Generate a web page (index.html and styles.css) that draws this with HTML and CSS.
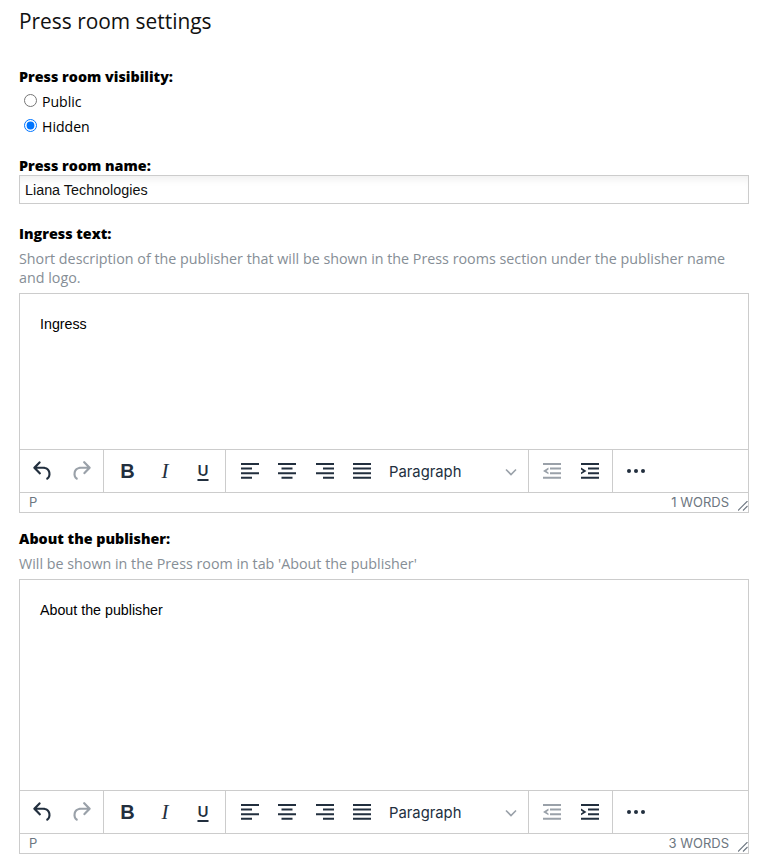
FILE: index.html
```html
<!DOCTYPE html>
<html lang="en">
<head>
    <meta charset="UTF-8">
    <meta name="viewport" content="width=device-width, initial-scale=1.0">
    <title>Press room settings</title>
    <link rel="stylesheet" href="styles.css">
</head>
<body>

<svg class="icon-defs" width="0" height="0" aria-hidden="true">
    <symbol id="i-undo" viewBox="0 0 24 24"><path d="M6.4 8H12c3.7 0 6.2 2 6.8 5.1.6 2.7-.4 5.6-2.3 6.8a1 1 0 0 1-1-1.8c1.1-.6 1.8-2.7 1.4-4.6-.5-2.1-2.1-3.5-4.9-3.5H6.4l3.3 3.3a1 1 0 1 1-1.4 1.4l-5-5a1 1 0 0 1 0-1.4l5-5a1 1 0 0 1 1.4 1.4L6.4 8z"/></symbol>
    <symbol id="i-redo" viewBox="0 0 24 24"><path d="M17.6 10H12c-2.8 0-4.4 1.4-4.9 3.5-.4 2 .3 4 1.4 4.6a1 1 0 1 1-1 1.8c-2-1.2-2.9-4.1-2.3-6.8.6-3 3-5.1 6.8-5.1h5.6l-3.3-3.3a1 1 0 1 1 1.4-1.4l5 5a1 1 0 0 1 0 1.4l-5 5a1 1 0 0 1-1.4-1.4l3.3-3.3z"/></symbol>
    <symbol id="i-left" viewBox="0 0 18 16"><path d="M0 0h18v2H0zM0 4.6h11v2H0zM0 9.2h18v2H0zM0 13.8h11v2H0z"/></symbol>
    <symbol id="i-center" viewBox="0 0 18 16"><path d="M0 0h18v2H0zM3.5 4.6h11v2h-11zM0 9.2h18v2H0zM3.5 13.8h11v2h-11z"/></symbol>
    <symbol id="i-right" viewBox="0 0 18 16"><path d="M0 0h18v2H0zM7 4.6h11v2H7zM0 9.2h18v2H0zM7 13.8h11v2H7z"/></symbol>
    <symbol id="i-justify" viewBox="0 0 18 16"><path d="M0 0h18v2H0zM0 4.6h18v2H0zM0 9.2h18v2H0zM0 13.8h18v2H0z"/></symbol>
    <symbol id="i-outdent" viewBox="0 0 18 16"><path d="M0 0h18v2H0zM7 4.6h11v2H7zM7 9.2h11v2H7zM0 13.8h18v2H0zM5.5 4.6v1.8L3.4 7.9l2.1 1.5v1.8L0 7.9z"/></symbol>
    <symbol id="i-indent" viewBox="0 0 18 16"><path d="M0 0h18v2H0zM7 4.6h11v2H7zM7 9.2h11v2H7zM0 13.8h18v2H0zM0 4.6v1.8l2.1 1.5L0 9.4v1.8l5.5-3.3z"/></symbol>
</svg>

<div class="container">
    <h2 class="page-title">Press room settings</h2>

    <div class="field field-visibility">
        <div class="field-label">Press room visibility:</div>
        <div class="radio-list">
            <label class="radio-row"><input type="radio" name="visibility"> Public</label>
            <label class="radio-row"><input type="radio" name="visibility" checked> Hidden</label>
        </div>
    </div>

    <div class="field field-name">
        <label class="field-label" for="roomName">Press room name:</label>
        <input class="text-input" type="text" id="roomName" value="Liana Technologies">
    </div>

    <div class="field field-ingress">
        <div class="field-label">Ingress text:</div>
        <p class="field-help">Short description of the publisher that will be shown in the Press rooms section under the publisher name and logo.</p>
        <div class="editor">
            <div class="editor-body editor-body-short">Ingress</div>
            <div class="toolbar">
                <div class="tb-group tb-group-2">
                    <span class="tb-btn"><svg class="ic-24"><use href="#i-undo"/></svg></span>
                    <span class="tb-btn tb-off"><svg class="ic-24"><use href="#i-redo"/></svg></span>
                </div>
                <div class="tb-group tb-group-3">
                    <span class="tb-btn tb-bold">B</span>
                    <span class="tb-btn tb-italic">I</span>
                    <span class="tb-btn tb-under">U</span>
                </div>
                <div class="tb-group tb-group-wide">
                    <span class="tb-btn"><svg class="ic-18"><use href="#i-left"/></svg></span>
                    <span class="tb-btn"><svg class="ic-18"><use href="#i-center"/></svg></span>
                    <span class="tb-btn"><svg class="ic-18"><use href="#i-right"/></svg></span>
                    <span class="tb-btn"><svg class="ic-18"><use href="#i-justify"/></svg></span>
                    <span class="tb-select">Paragraph<svg class="chevron" viewBox="0 0 12 8"><path d="M1 1.5l5 5 5-5"/></svg></span>
                </div>
                <div class="tb-group tb-group-2">
                    <span class="tb-btn tb-off"><svg class="ic-18"><use href="#i-outdent"/></svg></span>
                    <span class="tb-btn"><svg class="ic-18"><use href="#i-indent"/></svg></span>
                </div>
                <div class="tb-group tb-group-last">
                    <span class="tb-btn"><span class="dots"><i></i><i></i><i></i></span></span>
                </div>
            </div>
            <div class="statusbar">
                <span>P</span>
                <span class="word-count">1 WORDS</span>
                <svg class="grip" viewBox="0 0 10 10"><path d="M0 9.5L9.5 0M5 9.5L9.5 5"/></svg>
            </div>
        </div>
    </div>

    <div class="field field-about">
        <div class="field-label">About the publisher:</div>
        <p class="field-help">Will be shown in the Press room in tab 'About the publisher'</p>
        <div class="editor">
            <div class="editor-body editor-body-tall">About the publisher</div>
            <div class="toolbar">
                <div class="tb-group tb-group-2">
                    <span class="tb-btn"><svg class="ic-24"><use href="#i-undo"/></svg></span>
                    <span class="tb-btn tb-off"><svg class="ic-24"><use href="#i-redo"/></svg></span>
                </div>
                <div class="tb-group tb-group-3">
                    <span class="tb-btn tb-bold">B</span>
                    <span class="tb-btn tb-italic">I</span>
                    <span class="tb-btn tb-under">U</span>
                </div>
                <div class="tb-group tb-group-wide">
                    <span class="tb-btn"><svg class="ic-18"><use href="#i-left"/></svg></span>
                    <span class="tb-btn"><svg class="ic-18"><use href="#i-center"/></svg></span>
                    <span class="tb-btn"><svg class="ic-18"><use href="#i-right"/></svg></span>
                    <span class="tb-btn"><svg class="ic-18"><use href="#i-justify"/></svg></span>
                    <span class="tb-select">Paragraph<svg class="chevron" viewBox="0 0 12 8"><path d="M1 1.5l5 5 5-5"/></svg></span>
                </div>
                <div class="tb-group tb-group-2">
                    <span class="tb-btn tb-off"><svg class="ic-18"><use href="#i-outdent"/></svg></span>
                    <span class="tb-btn"><svg class="ic-18"><use href="#i-indent"/></svg></span>
                </div>
                <div class="tb-group tb-group-last">
                    <span class="tb-btn"><span class="dots"><i></i><i></i><i></i></span></span>
                </div>
            </div>
            <div class="statusbar">
                <span>P</span>
                <span class="word-count">3 WORDS</span>
                <svg class="grip" viewBox="0 0 10 10"><path d="M0 9.5L9.5 0M5 9.5L9.5 5"/></svg>
            </div>
        </div>
    </div>
</div>

</body>
</html>
```

FILE: styles.css
```css
* {
    box-sizing: border-box;
}
body {
    margin: 0;
    background: #fff;
    color: #000;
    font-family: "Open Sans", sans-serif;
    font-size: 14px;
}
.icon-defs {
    position: absolute;
}
.container {
    width: 730px;
    margin-left: 19px;
}
.page-title {
    margin: 0;
    padding-top: 7px;
    font-size: 20.9px;
    line-height: 28px;
    font-weight: 400;
    color: #111;
}
.field-label {
    display: block;
    font-weight: 800;
    font-size: 14.3px;
    line-height: 20px;
}
.field-visibility {
    margin-top: 32px;
}
.radio-list {
    margin-top: 2px;
}
.radio-row {
    display: flex;
    align-items: center;
    height: 25px;
    margin-left: 5px;
    font-size: 14.1px;
}
.radio-row input {
    width: 13px;
    height: 13px;
    margin: 0 5px 2px 0;
}
.field-name {
    margin-top: 17px;
}
.field-name .field-label {
    line-height: 19px;
}
.text-input {
    display: block;
    width: 100%;
    height: 29px;
    padding: 0 5px;
    border: 1px solid #ccc;
    border-radius: 0;
    outline: none;
    font-family: "Liberation Sans", sans-serif;
    font-size: 14.35px;
    color: #111;
    box-shadow: inset 0 8px 8px -5px rgba(0, 0, 0, 0.07);
}
.field-ingress {
    margin-top: 20px;
}
.field-about {
    margin-top: 16px;
}
.field-help {
    margin: 5px 0 6px;
    font-size: 14.3px;
    line-height: 19px;
    color: #868e96;
}
.field-about .field-help {
    margin: 5px 0 6px;
}
.editor {
    border: 1px solid #ccc;
}
.editor-body {
    padding: 20px;
    font-family: "Liberation Sans", sans-serif;
    font-size: 14.25px;
    line-height: 20px;
}
.editor-body-short {
    height: 155px;
}
.editor-body-tall {
    height: 210px;
}
.toolbar {
    display: flex;
    height: 44px;
    border-top: 1px solid #ccc;
    border-bottom: 1px solid #ccc;
    color: #222f3e;
    fill: #222f3e;
}
.tb-group {
    display: flex;
    align-items: center;
    padding: 0 3px 0 4px;
    border-right: 1px solid #ccc;
}
.tb-group-2 {
    width: 84px;
}
.tb-group-3 {
    width: 122px;
}
.tb-group-wide {
    width: 303px;
    padding-left: 5px;
}
.tb-group-wide .tb-btn {
    width: 37.5px;
}
.tb-group-last {
    border-right: none;
}
.tb-btn {
    display: flex;
    align-items: center;
    justify-content: center;
    flex: none;
    width: 38px;
    height: 34px;
    margin-top: -1px;
}
.tb-off {
    fill: #9aa1a9;
}
.ic-24 {
    width: 26px;
    height: 26px;
}
.ic-18 {
    width: 18px;
    height: 16px;
}
.tb-bold {
    padding: 1px 0 0 1px;
    font-family: "Liberation Sans", sans-serif;
    font-weight: 700;
    font-size: 20px;
}
.tb-italic {
    padding-top: 1px;
    font-family: "Liberation Serif", serif;
    font-style: italic;
    font-size: 21px;
}
.tb-under {
    font-family: Inter, sans-serif;
    font-size: 15px;
    font-weight: 600;
    text-decoration: underline;
    text-decoration-thickness: 2px;
    text-underline-offset: 3px;
}
.tb-select {
    display: flex;
    align-items: center;
    justify-content: space-between;
    flex: 1;
    padding: 1px 8px 0 8px;
    font-family: Inter, sans-serif;
    font-size: 14.8px;
}
.chevron {
    width: 12px;
    height: 8px;
    fill: none;
    stroke: #9aa1a9;
    stroke-width: 1.6;
}
.dots {
    display: flex;
    gap: 3px;
}
.dots i {
    width: 4px;
    height: 4px;
    border-radius: 50%;
    background: #222f3e;
}
.statusbar {
    display: flex;
    align-items: center;
    height: 19px;
    padding: 0 0 2px 9px;
    font-family: Inter, sans-serif;
    font-size: 13px;
    color: #6d7681;
}
.word-count {
    margin-left: auto;
    margin-right: 9px;
}
.grip {
    width: 10px;
    height: 10px;
    margin-top: 9px;
    fill: none;
    stroke: #6d7681;
    stroke-width: 1.1;
}
```
